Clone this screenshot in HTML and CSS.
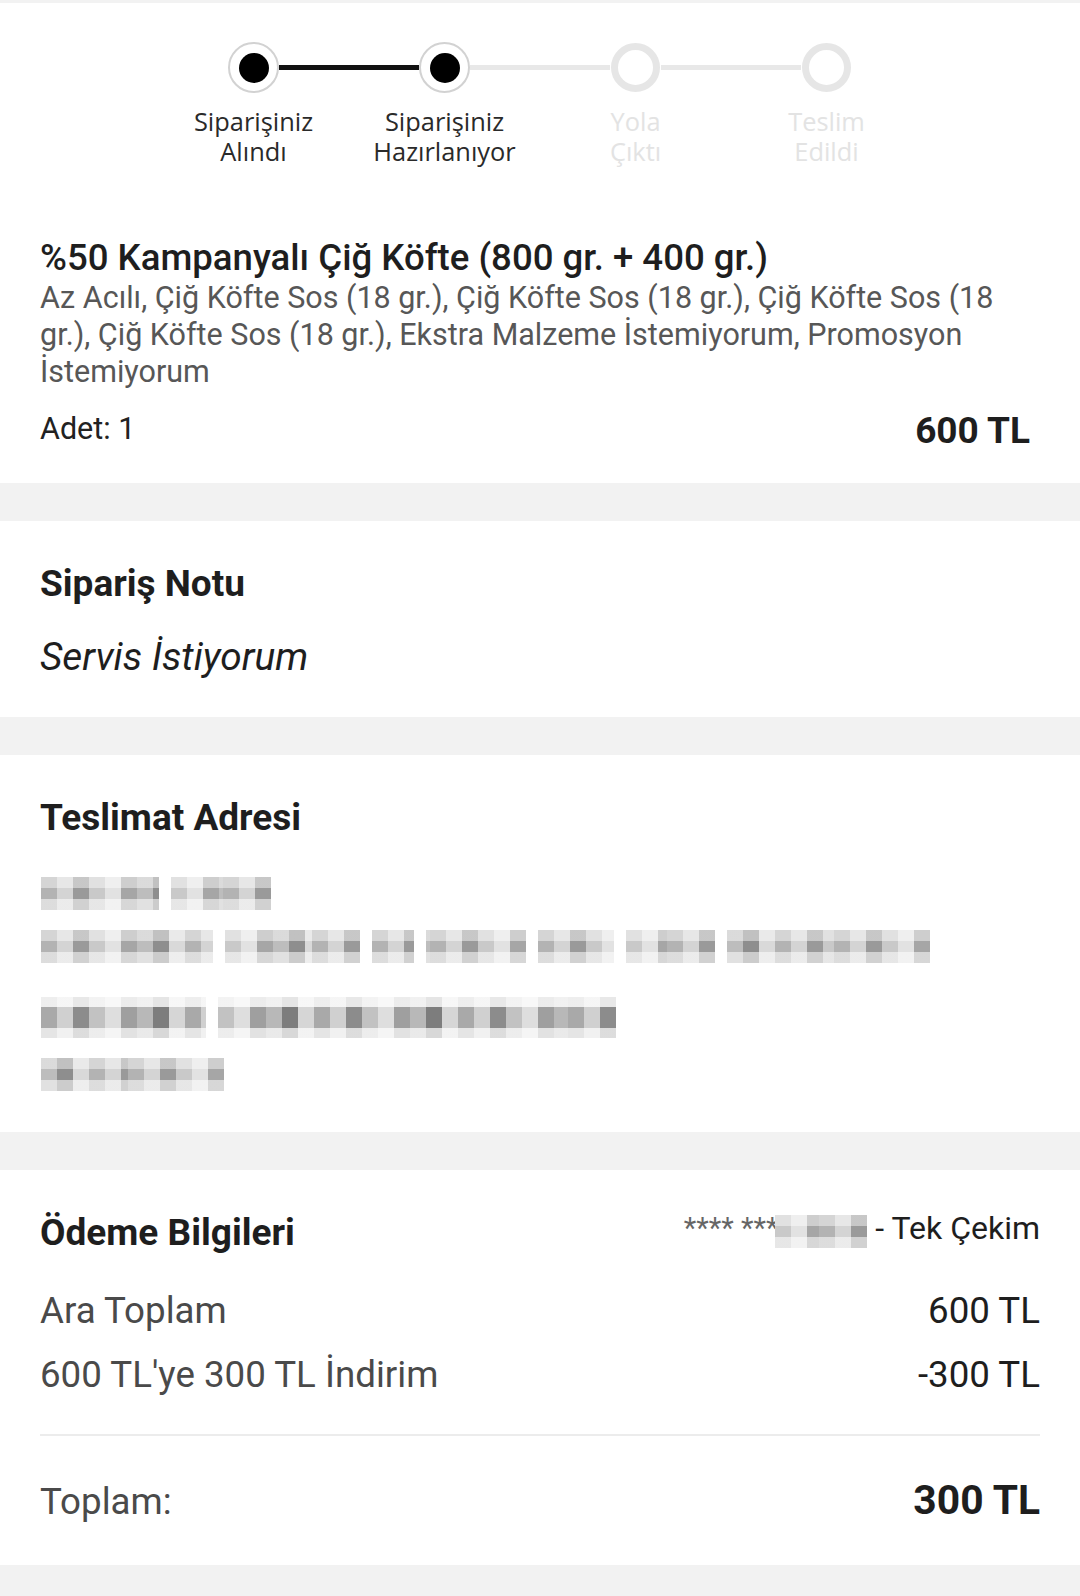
FILE: index.html
```html
<!DOCTYPE html>
<html lang="tr">
<head>
<meta charset="utf-8">
<title>Sipariş Detayı</title>
<link rel="stylesheet" href="styles.css">
</head>
<body>
<main class="page">
  <section class="card card-order">
    <div class="steps">
      <div class="track">
        <span class="dot done"><span class="core"></span></span>
        <span class="line done"></span>
        <span class="dot done"><span class="core"></span></span>
        <span class="line"></span>
        <span class="dot"></span>
        <span class="line"></span>
        <span class="dot"></span>
      </div>
      <div class="labels">
        <div class="label active"><span class="ln">Siparişiniz</span><span class="ln">Alındı</span></div>
        <div class="label active"><span class="ln">Siparişiniz</span><span class="ln">Hazırlanıyor</span></div>
        <div class="label"><span class="ln">Yola</span><span class="ln">Çıktı</span></div>
        <div class="label"><span class="ln">Teslim</span><span class="ln">Edildi</span></div>
      </div>
    </div>
    <h1 class="item-title">%50 Kampanyalı Çiğ Köfte (800 gr. + 400 gr.)</h1>
    <p class="item-desc">Az Acılı, Çiğ Köfte Sos (18 gr.), Çiğ Köfte Sos (18 gr.), Çiğ Köfte Sos (18 gr.), Çiğ Köfte Sos (18 gr.), Ekstra Malzeme İstemiyorum, Promosyon İstemiyorum</p>
    <div class="item-row">
      <span class="qty">Adet: 1</span>
      <span class="item-price">600 TL</span>
    </div>
  </section>

  <section class="card card-note">
    <h2 class="heading">Sipariş Notu</h2>
    <p class="note">Servis İstiyorum</p>
  </section>

  <section class="card card-address">
    <h2 class="heading">Teslimat Adresi</h2>
    <div class="address">
      <div class="mline l1"><span class="mask w120"></span><span class="mask w100 alt"></span></div>
      <div class="mline l2"><span class="mask w172"></span><span class="mask w135 alt"></span><span class="mask w42"></span><span class="mask w100 alt2"></span><span class="mask w76"></span><span class="mask w89 alt"></span><span class="mask w203 alt2"></span></div>
      <div class="mline l3"><span class="mask w165 tall"></span><span class="mask w400 tall alt"></span></div>
      <div class="mline l4"><span class="mask w183 alt2"></span></div>
    </div>
  </section>

  <section class="card card-pay">
    <div class="pay-head">
      <h2 class="heading">Ödeme Bilgileri</h2>
      <span class="card-no"><span class="stars">**** *****</span><span class="mask w92 alt"></span> - Tek Çekim</span>
    </div>
    <div class="pay-row first"><span class="pay-label">Ara Toplam</span><span class="pay-value">600 TL</span></div>
    <div class="pay-row"><span class="pay-label">600 TL'ye 300 TL İndirim</span><span class="pay-value">-300 TL</span></div>
    <hr class="divider">
    <div class="total-row"><span class="total-label">Toplam:</span><span class="total-value">300 TL</span></div>
  </section>
</main>
</body>
</html>
```

FILE: styles.css
```css
* { box-sizing: border-box; }

html, body {
  margin: 0;
  padding: 0;
}

body {
  background: #f2f2f2;
  font-family: Roboto, "Noto Sans", "Liberation Sans", sans-serif;
  color: #222;
  width: 1080px;
  min-height: 1596px;
}

.page {
  display: flex;
  flex-direction: column;
  gap: 38px;
  padding-top: 3px;
}

.card {
  background: #fff;
  padding: 0 40px;
}

/* ---------- steps ---------- */
.card-order {
  padding-top: 39px;
  padding-bottom: 31px;
}

.steps {
  display: flex;
  flex-direction: column;
  align-items: center;
}

.track {
  display: flex;
  align-items: center;
  height: 51px;
}

.dot {
  width: 49px;
  height: 49px;
  border-radius: 50%;
  border: 7px solid #e6e6e6;
  background: #fff;
  flex: none;
  display: flex;
  align-items: center;
  justify-content: center;
  margin: 0 1px;
}

.dot.done {
  width: 51px;
  height: 51px;
  border: 2px solid #d2d2d2;
  margin: 0;
}

.core {
  width: 30px;
  height: 30px;
  border-radius: 50%;
  background: #000;
}

.line {
  width: 140px;
  height: 5px;
  background: #e8e8e8;
  flex: none;
}

.line.done {
  background: #111;
}

.labels {
  display: grid;
  grid-template-columns: repeat(4, 191px);
  margin-top: 13px;
}

.label {
  display: flex;
  flex-direction: column;
  align-items: center;
  gap: 2px;
  font-family: "Open Sans", "Noto Sans", sans-serif;
  font-size: 25.4px;
  line-height: 28px;
  text-align: center;
  color: #e3e3e3;
  padding-top: 1px;
}

.label.active {
  color: #2a2a2a;
}

/* ---------- item ---------- */
.item-title {
  margin: 71px 0 0;
  font-size: 36.6px;
  line-height: 43px;
  font-weight: 500;
  color: #1e1e1e;
}

.item-desc {
  margin: 0;
  font-size: 30.5px;
  line-height: 37px;
  color: #575757;
}

.item-row {
  display: flex;
  justify-content: space-between;
  align-items: flex-start;
  margin-top: 20px;
}

.qty {
  font-size: 30.5px;
  line-height: 37px;
  color: #222;
}

.item-price {
  font-size: 37px;
  line-height: 42px;
  font-weight: 700;
  color: #1e1e1e;
  margin-right: 10px;
}

/* ---------- headings ---------- */
.heading {
  margin: 0;
  font-size: 37px;
  line-height: 42px;
  font-weight: 700;
  color: #1e1e1e;
}

.card-note {
  padding-top: 42px;
  padding-bottom: 39px;
}

.note {
  margin: 31px 0 0;
  font-size: 38.8px;
  line-height: 42px;
  font-style: italic;
  color: #1e1e1e;
}

/* ---------- address ---------- */
.card-address {
  padding-top: 42px;
  padding-bottom: 41px;
}

.address {
  display: flex;
  flex-direction: column;
  margin-top: 38px;
}

.mline {
  display: flex;
  gap: 12px;
  padding-left: 1px;
}

.l2 { margin-top: 20px; }
.l3 { margin-top: 34px; }
.l4 { margin-top: 20px; }

.mask {
  display: inline-block;
  height: 33px;
  background-color: #c4c4c4;
  background-image:
    linear-gradient(to bottom, rgba(255,255,255,0.45) 0 11px, rgba(255,255,255,0) 11px 22px, rgba(255,255,255,0.55) 22px 33px),
    repeating-linear-gradient(90deg, #b3b3b3 0 16px, #d4d4d4 16px 32px, #9a9a9a 32px 48px, #c9c9c9 48px 64px, #e2e2e2 64px 80px, #a6a6a6 80px 96px, #bdbdbd 96px 112px, #8e8e8e 112px 128px, #d9d9d9 128px 144px);
}

.mask.alt { background-position: 0 0, -48px 0; }
.mask.alt2 { background-position: 0 0, -96px 0; }

.mask.tall {
  height: 41px;
  background-image:
    linear-gradient(to bottom, rgba(255,255,255,0.8) 0 10px, rgba(255,255,255,0) 10px 31px, rgba(255,255,255,0.7) 31px 41px),
    repeating-linear-gradient(90deg, #a9a9a9 0 16px, #d0d0d0 16px 32px, #8c8c8c 32px 48px, #c2c2c2 48px 64px, #dedede 64px 80px, #9f9f9f 80px 96px, #b8b8b8 96px 112px, #7d7d7d 112px 128px, #d6d6d6 128px 144px);
}

.w42 { width: 42px; }
.w76 { width: 76px; }
.w92 { width: 92px; }
.w89 { width: 89px; }
.w100 { width: 100px; }
.w120 { width: 118px; }
.w135 { width: 135px; }
.w165 { width: 165px; }
.w172 { width: 172px; }
.w183 { width: 183px; }
.w203 { width: 203px; }
.w400 { width: 398px; }

/* ---------- payment ---------- */
.card-pay {
  padding-top: 42px;
  padding-bottom: 38px;
}

.pay-head {
  display: flex;
  justify-content: space-between;
  align-items: flex-start;
}

.card-no {
  display: flex;
  align-items: center;
  font-size: 32px;
  line-height: 42px;
  color: #1e1e1e;
  white-space: pre;
  margin-top: -5px;
}

.stars {
  font-size: 29px;
  color: #666;
}

.card-no .mask {
  height: 33px;
  margin-left: -28px;
  margin-top: 6px;
}

.pay-row {
  display: flex;
  justify-content: space-between;
  font-size: 36.7px;
  line-height: 42px;
  margin-top: 22px;
}

.pay-row.first {
  margin-top: 36px;
}

.pay-label {
  color: #4a4a4a;
}

.pay-value {
  color: #1e1e1e;
}

.divider {
  margin: 38px 0 0;
  border: 0;
  height: 2px;
  background: #ececec;
}

.total-row {
  display: flex;
  justify-content: space-between;
  align-items: baseline;
  margin-top: 39px;
  line-height: 50px;
}

.total-label {
  font-size: 36.7px;
  color: #4a4a4a;
}

.total-value {
  font-size: 40.8px;
  font-weight: 700;
  color: #1e1e1e;
}
```
